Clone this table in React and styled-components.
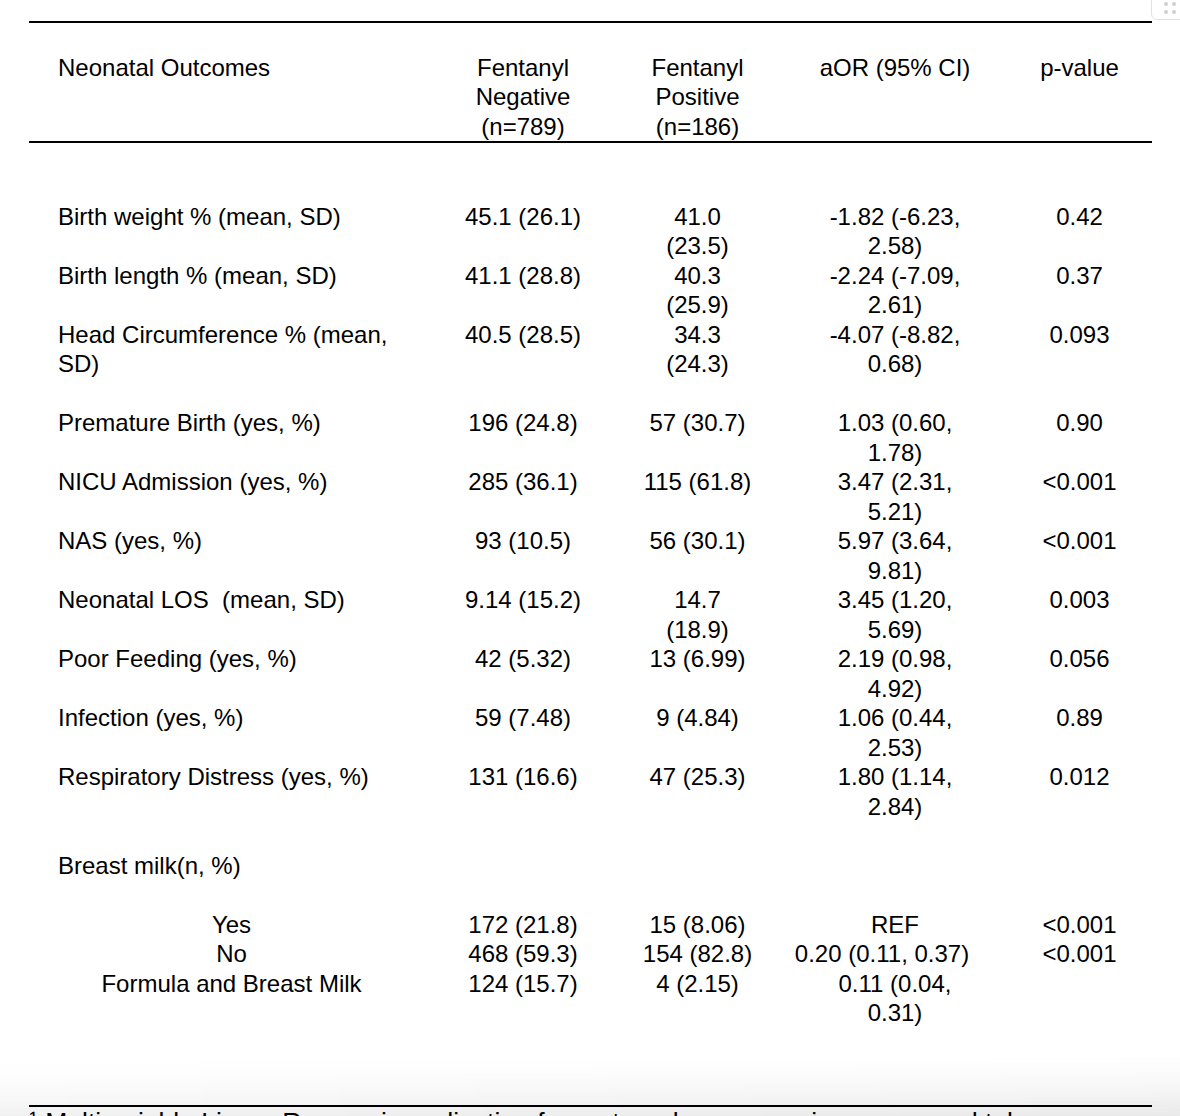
import React from "react";
import styled, { createGlobalStyle } from "styled-components";

const Global = createGlobalStyle`
  html, body { margin: 0; padding: 0; background: #fff; }
  body { font-family: "Liberation Sans", Arial, Helvetica, sans-serif; color: #000; }
`;

const COLS = "405px 178px 171px 224px 145px";
const LINE = 29.5;

const Page = styled.div`
  position: relative;
  height: 1116px;
  overflow: hidden;
  padding: 21px 0 0 29px;
  box-sizing: border-box;
`;

const Table = styled.div`
  width: 1123px;
  border-top: 2px solid #000;
  font-size: 24px;
  line-height: ${LINE}px;
`;

const HeaderRow = styled.div`
  display: grid;
  grid-template-columns: ${COLS};
  padding-top: 29.5px;
  border-bottom: 2px solid #000;
  min-height: ${LINE * 3}px;
`;

const Row = styled.div`
  display: grid;
  grid-template-columns: ${COLS};
  min-height: ${(p) => (p.$lines || 1) * LINE}px;
`;

const Spacer = styled.div`
  height: ${(p) => p.$h}px;
`;

const Cell = styled.div`
  padding: 0 29px 0 ${(p) => (p.$pl != null ? p.$pl : 29)}px;
  text-align: ${(p) => p.$align || "center"};
  white-space: ${(p) => (p.$wrap ? "pre-wrap" : "pre")};
`;

const BottomRule = styled.div`
  width: 1123px;
  border-top: 2px solid #000;
`;

const Footnote = styled.div`
  width: 1123px;
  font-size: 26.5px;
  line-height: 30px;
  white-space: nowrap;
`;

const Fade = styled.div`
  position: absolute;
  left: 0;
  right: 0;
  bottom: 0;
  height: 62px;
  pointer-events: none;
  background:
    linear-gradient(to right, rgba(0, 0, 0, 0) 0%, rgba(0, 0, 0, 0.035) 100%),
    linear-gradient(to bottom, rgba(0, 0, 0, 0) 0%, rgba(0, 0, 0, 0.055) 100%);
  -webkit-mask-image: linear-gradient(to bottom, transparent 0%, #000 100%);
  mask-image: linear-gradient(to bottom, transparent 0%, #000 100%);
`;

const Handle = styled.div`
  position: absolute;
  top: -6px;
  left: 1151px;
  width: 40px;
  height: 26px;
  box-sizing: border-box;
  border: 1px solid #e2e2e2;
  border-radius: 6px;
  background: #fff;
`;

const Dots = styled.div`
  position: absolute;
  top: 7px;
  left: 12px;
  display: grid;
  grid-template-columns: 4px 4px;
  gap: 4px 4px;
  & > span {
    width: 4px;
    height: 4px;
    border-radius: 50%;
    background: #d0d0d0;
  }
`;

const rows = [
  ["Birth weight % (mean, SD)", "45.1 (26.1)", "41.0\n(23.5)", "-1.82 (-6.23,\n2.58)", "0.42", 2],
  ["Birth length % (mean, SD)", "41.1 (28.8)", "40.3\n(25.9)", "-2.24 (-7.09,\n2.61)", "0.37", 2],
  ["Head Circumference % (mean, SD)", "40.5 (28.5)", "34.3\n(24.3)", "-4.07 (-8.82,\n0.68)", "0.093", 3],
  ["Premature Birth (yes, %)", "196 (24.8)", "57 (30.7)", "1.03 (0.60,\n1.78)", "0.90", 2],
  ["NICU Admission (yes, %)", "285 (36.1)", "115 (61.8)", "3.47 (2.31,\n5.21)", "<0.001", 2],
  ["NAS (yes, %)", "93 (10.5)", "56 (30.1)", "5.97 (3.64,\n9.81)", "<0.001", 2],
  ["Neonatal LOS  (mean, SD)", "9.14 (15.2)", "14.7\n(18.9)", "3.45 (1.20,\n5.69)", "0.003", 2],
  ["Poor Feeding (yes, %)", "42 (5.32)", "13 (6.99)", "2.19 (0.98,\n4.92)", "0.056", 2],
  ["Infection (yes, %)", "59 (7.48)", "9 (4.84)", "1.06 (0.44,\n2.53)", "0.89", 2],
  ["Respiratory Distress (yes, %)", "131 (16.6)", "47 (25.3)", "1.80 (1.14,\n2.84)", "0.012", 3],
];

const milk = [
  ["Yes", "172 (21.8)", "15 (8.06)", "REF", "<0.001"],
  ["No", "468 (59.3)", "154 (82.8)", "0.20 (0.11, 0.37)", "<0.001", 3],
  ["Formula and Breast Milk", "124 (15.7)", "4 (2.15)", "0.11 (0.04,\n0.31)", ""],
];

export default function App() {
  return (
    <Page>
      <Global />
      <Table>
        <HeaderRow>
          <Cell $align="left" $wrap>Neonatal Outcomes</Cell>
          <Cell>{"Fentanyl\nNegative\n(n=789)"}</Cell>
          <Cell>{"Fentanyl\nPositive\n(n=186)"}</Cell>
          <Cell>aOR (95% CI)</Cell>
          <Cell>p-value</Cell>
        </HeaderRow>
        <Spacer $h={58.5} />
        {rows.map((r) => (
          <Row key={r[0]} $lines={r[5]}>
            <Cell $align="left" $wrap>{r[0]}</Cell>
            <Cell>{r[1]}</Cell>
            <Cell>{r[2]}</Cell>
            <Cell>{r[3]}</Cell>
            <Cell>{r[4]}</Cell>
          </Row>
        ))}
        <Row $lines={2}>
          <Cell $align="left" $wrap>Breast milk(n, %)</Cell>
        </Row>
        {milk.map((r) => (
          <Row key={r[0]} $lines={1}>
            <Cell>{r[0]}</Cell>
            <Cell>{r[1]}</Cell>
            <Cell>{r[2]}</Cell>
            <Cell $pl={r[5]}>{r[3]}</Cell>
            <Cell>{r[4]}</Cell>
          </Row>
        ))}
        <Spacer $h={77.5} />
      </Table>
      <BottomRule />
      <Footnote>
        ¹ Multivariable Linear Regression adjusting for maternal age, race, insurance and tobacco use
      </Footnote>
      <Fade />
      <Handle>
        <Dots>
          <span />
          <span />
          <span />
          <span />
        </Dots>
      </Handle>
    </Page>
  );
}
